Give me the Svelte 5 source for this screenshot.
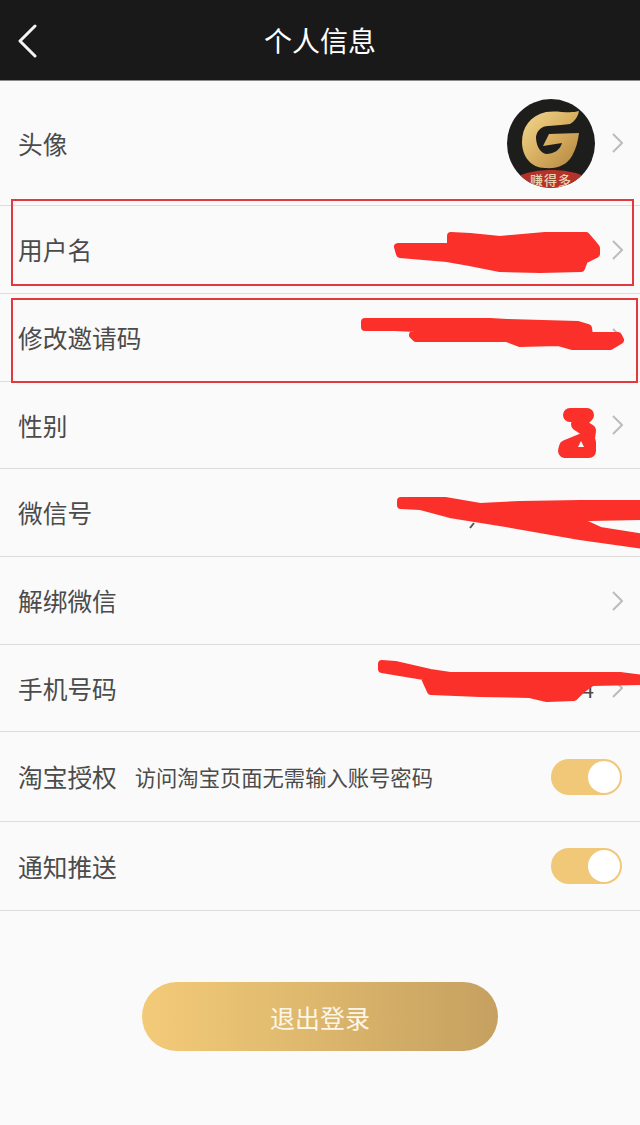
<script>
  const rows = [
    { label: '头像', kind: 'avatar', chevron: true },
    { label: '用户名', chevron: true },
    { label: '修改邀请码', chevron: true },
    { label: '性别', chevron: true },
    { label: '微信号' },
    { label: '解绑微信', chevron: true },
    { label: '手机号码', value: '4', chevron: true },
    { label: '淘宝授权', hint: '访问淘宝页面无需输入账号密码', toggle: true },
    { label: '通知推送', toggle: true }
  ];

  const scribbles = [
    'M398 247 L451 247 L451 236 L470 237 L500 240 L545 236 L586 236 L592 243 L596 248 L596 254 L584 260 L581 268 L540 269 L500 268 L470 262 L447 258 L400 254 Z',
    'M365 322 L490 322 L507 323 L578 325 L588 328 L589 336 L618 336 L620 340 L610 346 L572 346 L558 342 L520 343 L507 338 L416 338 L413 335 L416 328 L395 327 L365 327 Z',
    'M401 501 L445 501 L480 507 L520 505 L580 504 L644 504 L644 516 L590 517 L578 521 L600 531 L644 538 L644 545 L580 536 L500 522 L450 514 L420 506 L401 505 Z',
    'M382 664 L395 665 L430 673 L450 676 L620 676 L644 679 L644 681 L592 682 L582 689 L574 697 L547 698 L530 694 L480 693 L431 691 L426 680 L424 676 L382 669 Z'
  ];
</script>

<div class="page">
  <header class="bar">
    <svg class="back" viewBox="0 0 20 34" width="20" height="34" aria-hidden="true">
      <path d="M18 2 L3 17 L18 32" />
    </svg>
    <h1>个人信息</h1>
  </header>

  <section class="list">
    {#each rows as row}
      <div class="row">
        <span class="label">{row.label}</span>
        {#if row.hint}<span class="hint">{row.hint}</span>{/if}
        <span class="spacer"></span>
        {#if row.kind === 'avatar'}
          <div class="avatar">
            <svg viewBox="0 0 88 89" width="88" height="89" aria-hidden="true">
              <defs>
                <linearGradient id="gold" x1="0" y1="0" x2="1" y2="1">
                  <stop offset="0" stop-color="#f2d98f" />
                  <stop offset="0.5" stop-color="#d9b062" />
                  <stop offset="1" stop-color="#b0853f" />
                </linearGradient>
              </defs>
              <rect width="88" height="89" fill="#1d1d1b" />
              <path d="M0 89 V82 Q22 70 44 71 Q66 70 88 82 V89 Z" fill="#b5322a" />
              <path fill="url(#gold)" d="M72 12 C62 15 50 11 39 13 C23 17 15 28 15 43 C15 57 24 69 38 69 C50 70 60 66 65 57 C69 50 71 42 72 34 L42 35 L36 47 L55 44 C53 51 47 55 39 55 C33 54 29 46 29 38 C30 31 35 27 41 27 C50 26 58 26 63 25 C67 23 71 18 72 12 Z" />
            </svg>
            <span class="brand">赚得多</span>
          </div>
        {/if}
        {#if row.value}<span class="value">{row.value}</span>{/if}
        {#if row.chevron}
          <svg class="chev" viewBox="0 0 11 20" width="11" height="20" aria-hidden="true">
            <path d="M1 1 L10 10 L1 19" />
          </svg>
        {/if}
        {#if row.toggle}
          <span class="toggle"><span class="knob"></span></span>
        {/if}
      </div>
    {/each}
  </section>

  <button class="logout" type="button">退出登录</button>

  <svg class="marks" viewBox="0 0 640 1125" width="640" height="1125" aria-hidden="true">
    <rect class="box" x="12" y="200" width="621" height="85" />
    <rect class="box" x="12" y="299" width="625" height="83" />
    <path class="remnant" d="M470 528 L474 523" />
    {#each scribbles as d}
      <path class="scrib" {d} />
    {/each}
    <path class="brush" d="M570 415 L587 415 L578 424 L589 431 L588 438 L566 447 L565 451 L589 451 L589 442" />
    <path class="hole" d="M581 441 L584 447 L578 447 Z" />
  </svg>
</div>

<style>
  :global(body) {
    margin: 0;
    background: #fafafa;
  }
  .page {
    position: relative;
    width: 640px;
    height: 1125px;
    overflow: hidden;
    display: flex;
    flex-direction: column;
    background: #fafafa;
    font-family: "Noto Sans CJK SC", "Noto Sans", sans-serif;
    color: #4b4b4b;
  }
  .bar {
    position: relative;
    flex: none;
    height: 80px;
    background: #191919;
    border-bottom: 1px solid #8a8a8a;
    display: flex;
    align-items: center;
    justify-content: center;
  }
  h1 {
    margin: 0;
    font-size: 28px;
    font-weight: 400;
    color: #fff;
    line-height: 1;
  }
  .back {
    position: absolute;
    left: 17px;
    top: 24px;
  }
  .back path {
    fill: none;
    stroke: #f4f4f4;
    stroke-width: 3;
    stroke-linecap: round;
    stroke-linejoin: round;
  }
  .list {
    flex: none;
    display: grid;
    grid-template-rows: 125px 88px 88px 87px 88px 88px 87px 90px 89px;
  }
  .row {
    box-sizing: border-box;
    display: flex;
    align-items: center;
    padding: 0 17px 0 18px;
    border-bottom: 1px solid #dcdcdc;
  }
  .label {
    font-size: 24.7px;
    line-height: 1;
  }
  .hint {
    margin-left: 18px;
    font-size: 21.3px;
    line-height: 1;
  }
  .spacer {
    flex: 1;
  }
  .value {
    font-size: 22px;
    line-height: 1;
    margin-right: 18px;
  }
  .chev {
    flex: none;
  }
  .chev path {
    fill: none;
    stroke: #bcbcbc;
    stroke-width: 2;
  }
  .avatar {
    position: relative;
    width: 88px;
    height: 89px;
    border-radius: 50%;
    overflow: hidden;
    margin-right: 17px;
  }
  .avatar svg {
    display: block;
  }
  .brand {
    position: absolute;
    left: 0;
    right: 0;
    bottom: 1px;
    text-align: center;
    font-size: 13px;
    font-weight: 500;
    line-height: 15px;
    letter-spacing: 1px;
    color: #ecd2b0;
  }
  .toggle {
    box-sizing: border-box;
    width: 71px;
    height: 36px;
    margin-right: 1px;
    padding: 2px;
    border-radius: 18px;
    background: #f0c878;
    display: flex;
    justify-content: flex-end;
  }
  .knob {
    width: 32px;
    height: 32px;
    border-radius: 50%;
    background: #fff;
  }
  .logout {
    flex: none;
    align-self: center;
    width: 356px;
    height: 69px;
    margin-top: 71px;
    border: 0;
    padding: 0;
    border-radius: 35px;
    background: linear-gradient(90deg, #f3ca78 0%, #e3bd70 35%, #c5a060 100%);
    color: #fdf6e6;
    font-family: inherit;
    font-size: 25px;
  }
  .marks {
    position: absolute;
    left: 0;
    top: 0;
    pointer-events: none;
  }
  .box {
    fill: none;
    stroke: #e4393c;
    stroke-width: 2;
  }
  .remnant {
    fill: none;
    stroke: #555;
    stroke-width: 2;
  }
  .scrib {
    fill: #fb302b;
    stroke: #fb302b;
    stroke-width: 8;
    stroke-linejoin: round;
  }
  .brush {
    fill: none;
    stroke: #fb302b;
    stroke-width: 14;
    stroke-linejoin: round;
    stroke-linecap: round;
  }
  .hole {
    fill: #fafafa;
  }
</style>
